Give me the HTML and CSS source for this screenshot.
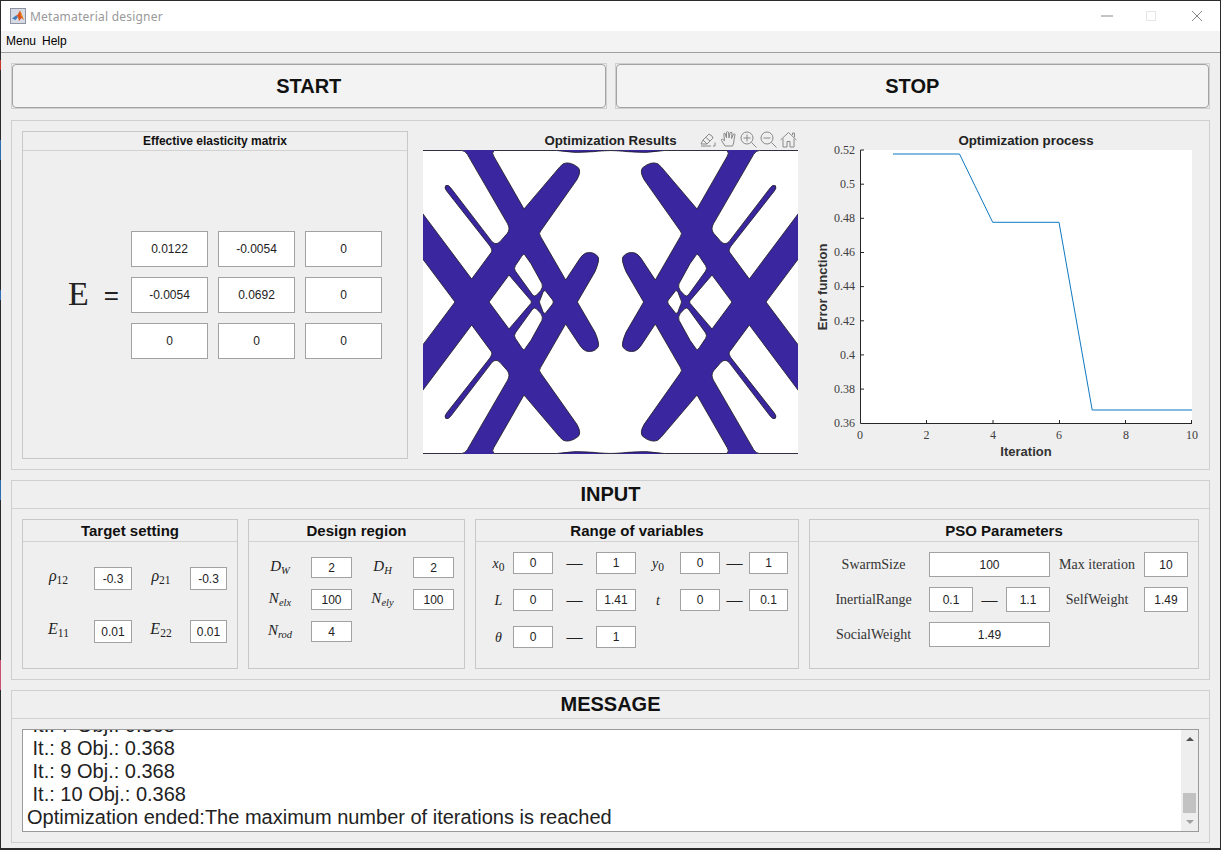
FILE: index.html
```html
<!DOCTYPE html>
<html lang="en">
<head>
<meta charset="utf-8">
<title>Metamaterial designer</title>
<link rel="stylesheet" href="styles.css">
</head>
<body>
<div class="window">
  <header class="titlebar">
    <svg class="appicon" width="16" height="16" viewBox="0 0 16 16">
      <rect x="0.5" y="0.5" width="15" height="15" fill="#d5dae4" stroke="#8d93a0"/>
      <path d="M2 10.5 6 7.5 8 9 5.5 12Z" fill="#3b7cc0"/>
      <path d="M6 7.5 7.6 6.8 10 2.5 11.2 5 13.8 12 11.5 10 9 13 8 9Z" fill="#d9541e"/>
      <path d="M10 2.5 11.2 5 13.8 12 11.2 8Z" fill="#f0a11e"/>
    </svg>
    <span class="apptitle">Metamaterial designer</span>
    <div class="winctl">
      <svg width="120" height="16" viewBox="0 0 120 16">
        <path class="wc" d="M1 8H13"/>
        <rect class="wc-off" x="46.5" y="3.5" width="9" height="9"/>
        <path class="wc" d="M92 3 102 13M102 3 92 13"/>
      </svg>
    </div>
  </header>
  <nav class="menubar"><span>Menu</span><span>Help</span></nav>
  <main class="content">
    <div class="buttons">
      <div class="btn-frame"><button class="btn">START</button></div>
      <div class="btn-frame"><button class="btn">STOP</button></div>
    </div>

    <section class="panel results">
      <div class="subpanel matrix">
        <div class="subtitle small">Effective elasticity matrix</div>
        <div class="matrix-body">
          <div class="eq"><span class="eq-e">E</span><span class="eq-s">=</span></div>
          <div class="matrix-grid">
            <div class="field">0.0122</div><div class="field">-0.0054</div><div class="field">0</div>
            <div class="field">-0.0054</div><div class="field">0.0692</div><div class="field">0</div>
            <div class="field">0</div><div class="field">0</div><div class="field">0</div>
          </div>
        </div>
      </div>

      <div class="plot">
        <div class="plot-title">Optimization Results</div>
        <div class="toolbar">
          <svg width="17" height="17" viewBox="0 0 17 17"><path class="ti" d="M1 13 3 9 9 3 12 5 13 7 7 13ZM3 9 7 13M6 6.500 10 10M1 15H11M15 11.500V15H13"/></svg>
          <svg width="17" height="18" viewBox="0 0 17 18"><path class="ti" d="M5 16 1.500 10.500Q1 9 2.500 9L4.500 11 3.800 4Q4 2.800 5 3.200L6.500 8 6.500 2.200Q7.500 1 8.500 2.200L9 8 10 2.700Q11 1.800 12 2.800L11.500 8.500 13.500 4Q14.800 3.500 15 4.500L14 10Q14 13 12.500 16Z"/></svg>
          <svg width="17" height="17" viewBox="0 0 17 17"><circle class="ti" cx="7" cy="7" r="6"/><path class="ti" d="M11.500 11.500 16.500 16.500M7 3.500V10.500M3.500 7H10.500"/></svg>
          <svg width="17" height="17" viewBox="0 0 17 17"><circle class="ti" cx="7" cy="7" r="6"/><path class="ti" d="M11.500 11.500 16.500 16.500M3.500 7H10.500"/></svg>
          <svg width="17" height="17" viewBox="0 0 17 17"><path class="ti" d="M0.500 9 8.500 1.500 16.500 9M3 7.500V16H7V10.500H10V16H14V7.500M12.500 4V2H14.500V6"/></svg>
        </div>
        <svg class="lattice" width="375" height="304" viewBox="9 75 1125 912">
          <defs>
            <clipPath id="quad"><rect x="0" y="60" width="573" height="471"/></clipPath>
            <g id="q" clip-path="url(#quad)">
              <rect x="0" y="60" width="580" height="480" class="blue"/>
              <path class="hole" d="M0 76.500H125Q135 77 142 88L262 295Q272 312 262 325L240 350Q228 362 216 350L92 188Q85 178 77 182Q72 188 80 198L205 357Q220 375 214 382L155 462L0 255Z"/>
              <path class="hole" d="M222 76.500H410Q465 86 520 80Q550 76 600 76.500V640H480L472 531 525 440Q540 405 534 395Q520 378 498 384Q488 388 480 400L437 465 362 335Q355 325 362 318L470 165Q485 140 475 128Q450 108 430 116L420 125 312 252 222 95Q214 84 222 76.500Z"/>
              <path class="hole" d="M0 391 105 531 0 671Z"/>
              <path class="hole" d="M267 450 333 527Q335 531 333 535L267 612 207 531Z"/>
              <path class="hole" d="M313 388 333 416 366 476Q370 486 362 497L350 510Q344 516 338 510L286 438Q281 430 286 422L305 394Q310 386 313 388Z"/>
              <path class="hole" d="M376 497 398 525Q402 531 398 537L376 565Q370 568 367 560L359 541Q356 531 361 523L369 502Q372 495 376 497Z"/>
            </g>
          </defs>
          <use href="#q"/>
          <use href="#q" transform="translate(1143 0) scale(-1 1)"/>
          <use href="#q" transform="translate(0 1062) scale(1 -1)"/>
          <use href="#q" transform="translate(1143 1062) scale(-1 -1)"/>
        </svg>
      </div>

      <svg class="chart" width="392" height="328" viewBox="808 131 392 328">
        <rect x="860" y="150" width="332" height="273.500" fill="#fff"/>
        <path class="series" d="M893 154H959.500L992.700 222.300H1059L1092.200 410H1192"/>
        <path class="axis" d="M860.500 150V423.500H1192M860.500 150H864M860.500 184.200H864M860.500 218.300H864M860.500 252.500H864M860.500 286.600H864M860.500 320.800H864M860.500 354.900H864M860.500 389.100H864M926.500 423.500V420M993 423.500V420M1059.500 423.500V420M1125.500 423.500V420M1191.500 423.500V420"/>
        <text class="ct" x="1026" y="145">Optimization process</text>
        <g class="yt">
          <text x="855" y="154">0.52</text><text x="855" y="188">0.5</text><text x="855" y="222">0.48</text>
          <text x="855" y="256">0.46</text><text x="855" y="290">0.44</text><text x="855" y="325">0.42</text>
          <text x="855" y="359">0.4</text><text x="855" y="393">0.38</text><text x="855" y="427">0.36</text>
        </g>
        <g class="xt">
          <text x="860" y="439">0</text><text x="926.500" y="439">2</text><text x="993" y="439">4</text>
          <text x="1059" y="439">6</text><text x="1126" y="439">8</text><text x="1192" y="439">10</text>
        </g>
        <text class="al" x="1026" y="456">Iteration</text>
        <text class="al" transform="translate(827 287) rotate(-90)">Error function</text>
      </svg>
    </section>

    <section class="panel io">
      <div class="panel-title">INPUT</div>
      <div class="io-row">
        <div class="subpanel w-target">
          <div class="subtitle">Target setting</div>
          <div class="grid target">
            <div class="lab"><i>ρ</i><sub>12</sub></div><div class="field">-0.3</div>
            <div class="lab"><i>ρ</i><sub>21</sub></div><div class="field">-0.3</div>
            <div class="lab"><i>E</i><sub>11</sub></div><div class="field">0.01</div>
            <div class="lab"><i>E</i><sub>22</sub></div><div class="field">0.01</div>
          </div>
        </div>
        <div class="subpanel w-design">
          <div class="subtitle">Design region</div>
          <div class="grid design">
            <div class="lab tight"><i>D</i><sub class="it">W</sub></div><div class="field">2</div>
            <div class="lab tight"><i>D</i><sub class="it">H</sub></div><div class="field">2</div>
            <div class="lab tight"><i>N</i><sub class="it">elx</sub></div><div class="field">100</div>
            <div class="lab tight"><i>N</i><sub class="it">ely</sub></div><div class="field">100</div>
            <div class="lab tight"><i>N</i><sub class="it">rod</sub></div><div class="field">4</div>
          </div>
        </div>
        <div class="subpanel w-range">
          <div class="subtitle">Range of variables</div>
          <div class="grid range">
            <div class="lab first sm"><i>x</i><sub>0</sub></div><div class="field">0</div><div class="dash">—</div><div class="field">1</div>
            <div class="lab sm"><i>y</i><sub>0</sub></div><div class="field">0</div><div class="dash">—</div><div class="field">1</div>
            <div class="lab first sm"><i>L</i></div><div class="field">0</div><div class="dash">—</div><div class="field">1.41</div>
            <div class="lab sm"><i>t</i></div><div class="field">0</div><div class="dash">—</div><div class="field">0.1</div>
            <div class="lab first sm"><i>θ</i></div><div class="field">0</div><div class="dash">—</div><div class="field">1</div>
          </div>
        </div>
        <div class="subpanel w-pso">
          <div class="subtitle">PSO Parameters</div>
          <div class="grid pso">
            <div class="plab first">SwarmSize</div><div class="field span3">100</div>
            <div class="plab">Max iteration</div><div class="field">10</div>
            <div class="plab first">InertialRange</div><div class="field">0.1</div><div class="dash">—</div><div class="field">1.1</div>
            <div class="plab">SelfWeight</div><div class="field">1.49</div>
            <div class="plab first">SocialWeight</div><div class="field span3">1.49</div>
          </div>
        </div>
      </div>
    </section>

    <section class="panel msg">
      <div class="panel-title">MESSAGE</div>
      <div class="msg-wrap">
        <div class="msgbox">
          <div class="log">
            <div> It.: 7 Obj.: 0.368</div>
            <div> It.: 8 Obj.: 0.368</div>
            <div> It.: 9 Obj.: 0.368</div>
            <div> It.: 10 Obj.: 0.368</div>
            <div>Optimization ended:The maximum number of iterations is reached</div>
          </div>
          <div class="scroll">
            <span class="arrow up"></span>
            <span class="track"></span>
            <span class="thumb"></span>
            <span class="arrow down"></span>
          </div>
        </div>
      </div>
    </section>
  </main>
</div>
</body>
</html>
```

FILE: styles.css
```css
* { box-sizing: border-box; }
html, body { margin: 0; height: 850px; overflow: hidden; }
body {
  font-family: "Liberation Sans", Arial, sans-serif;
  color: #111;
  background-color: #2b2b2b;
  background-image: linear-gradient(#2b2b2b 0 60px, #c0392b 60px 70px, #2b2b2b 70px 140px, #2e6db0 140px 160px, #2b2b2b 160px 290px, #2e6db0 290px 300px, #2b2b2b 300px 480px, #2e6db0 480px 500px, #2b2b2b 500px 660px, #c9506e 660px 690px, #2b2b2b 690px);
  background-size: 1px 100%;
  background-repeat: no-repeat;
}
.window {
  margin: 1px 1px 2px 1px;
  height: 847px;
  display: flex;
  flex-direction: column;
  background: #efefef;
}
.titlebar {
  height: 30px;
  background: #fff;
  display: flex;
  align-items: center;
  padding-left: 9px;
  flex: none;
}
.appicon { flex: none; }
.apptitle {
  margin-left: 4px;
  font: 12px "Noto Sans", sans-serif;
  letter-spacing: 0.22px;
  color: #999;
}
.winctl { margin-left: auto; display: flex; }
.wc { fill: none; stroke: #8a8a8a; stroke-width: 1; }
.wc-off { fill: none; stroke: #e6e6e6; stroke-width: 1; }

.menubar {
  height: 22px;
  flex: none;
  background: #f3f3f3;
  border-bottom: 1px solid #a0a0a0;
  display: flex;
  gap: 6px;
  align-items: center;
  padding: 0 0 2px 5px;
  font-size: 12px;
  color: #000;
}

.content {
  flex: 1;
  padding: 10px 10px 0;
  display: flex;
  flex-direction: column;
  gap: 10px;
}
.buttons { display: flex; gap: 8px; height: 46px; flex: none; margin-bottom: 1px; }
.btn-frame {
  flex: 1;
  border: 1px solid #d0d0d0;
  background: #efefef;
}
.btn {
  display: block;
  width: 100%;
  height: 100%;
  border: 1px solid #a3a3a3;
  border-radius: 4px;
  background: #f3f3f3;
  font: bold 20px "Liberation Sans", Arial, sans-serif;
  color: #111;
  padding: 0;
}

.panel { border: 1px solid #cfcfcf; background: #efefef; flex: none; }
.results {
  height: 350px;
  padding: 10px;
  display: flex;
  gap: 15px;
  align-items: flex-start;
}
.subpanel { border: 1px solid #c8c8c8; background: #efefef; display: flex; flex-direction: column; }
.subtitle {
  height: 22px;
  flex: none;
  border-bottom: 1px solid #d2d2d2;
  text-align: center;
  font-weight: bold;
  font-size: 15px;
  line-height: 22px;
  color: #111;
}
.subtitle.small { height: 19px; font-size: 12px; line-height: 18px; }

.matrix { width: 386px; height: 328px; flex: none; }
.matrix-body { display: flex; padding-top: 80px; }
.eq { width: 108px; height: 128px; display: flex; align-items: center; padding-left: 45px; padding-bottom: 3px; }
.eq-e { font: 34px "Liberation Serif", serif; color: #222; }
.eq-s { font-size: 26px; margin: 3px 0 0 15px; color: #222; }
.matrix-grid {
  display: grid;
  grid-template-columns: repeat(3, 77px);
  grid-auto-rows: 36px;
  gap: 10px;
}

.field {
  background: #fff;
  border: 1px solid #a2a2a2;
  font-size: 12px;
  color: #222;
  display: flex;
  align-items: center;
  justify-content: center;
}

.plot { position: relative; width: 375px; height: 323px; flex: none; }
.plot-title {
  height: 19px;
  text-align: center;
  font-weight: bold;
  font-size: 13.3px;
  line-height: 19px;
  color: #222;
}
.toolbar {
  position: absolute;
  top: -1px;
  left: 277px;
  display: flex;
  gap: 3px;
  align-items: center;
}
.ti { fill: none; stroke: #8a8a8a; stroke-width: 1; }
.lattice { display: block; background: #fff; }
.blue { fill: #3a27a0; }
.hole { fill: #fff; stroke: #1e1e28; stroke-width: 2.6; }

.chart { display: block; flex: none; margin-left: -5px; }
.series { fill: none; stroke: #0f78c2; stroke-width: 1; }
.axis { fill: none; stroke: #262626; stroke-width: 1; }
.ct { font: bold 13.3px "Liberation Sans", Arial, sans-serif; text-anchor: middle; fill: #222; }
.al { font: bold 13px "Liberation Sans", Arial, sans-serif; text-anchor: middle; fill: #333; }
.yt text { font: 12px "Liberation Serif", serif; text-anchor: end; fill: #404040; }
.xt text { font: 12px "Liberation Serif", serif; text-anchor: middle; fill: #404040; }

.io { height: 200px; }
.msg { height: 153px; }
.panel-title {
  height: 28px;
  border-bottom: 1px solid #d2d2d2;
  text-align: center;
  font-weight: bold;
  font-size: 20px;
  line-height: 27px;
  color: #111;
}
.io-row { display: flex; gap: 10px; padding: 10px; height: 170px; }
.io-row .subpanel { height: 150px; flex: none; }
.w-target { width: 216px; }
.w-design { width: 217px; }
.w-range { width: 324px; }
.w-pso { width: 390px; }

.grid { display: grid; align-items: stretch; }
.target { grid-template-columns: 71px 38px 58px 37px; grid-auto-rows: 23px; row-gap: 30px; padding-top: 25px; }
.design { grid-template-columns: 62px 41px 61px 41px; grid-auto-rows: 21px; row-gap: 11px; padding-top: 15px; }
.range { grid-template-columns: 37px 40px 43px 40px 44px 40px 29px 39px; grid-auto-rows: 22px; row-gap: 15px; padding-top: 10px; }
.pso { grid-template-columns: 119px 44px 33px 44px 94px 44px; grid-auto-rows: 25px; row-gap: 10px; padding-top: 10px; }
.span3 { grid-column: span 3; }

.lab {
  font: 16px "Liberation Serif", serif;
  color: #222;
  text-align: center;
  line-height: 18px;
  white-space: nowrap;
}
.lab sub { font-size: 11.5px; line-height: 0; vertical-align: -3px; font-style: normal; }
.lab sub.it { font-style: italic; }
.lab.tight { font-size: 15px; line-height: 19px; }
.lab.tight sub { font-size: 10.5px; }
.lab.sm { font-size: 14px; line-height: 23px; }
.lab.first { padding-left: 8px; }
.plab {
  font: 14px "Liberation Serif", serif;
  color: #333;
  text-align: center;
  align-self: center;
  white-space: nowrap;
  margin-top: 0;
}
.plab.first { padding-left: 8px; }
.dash { font: 16px "Liberation Serif", serif; text-align: center; color: #222; align-self: center; }

.msg-wrap { padding: 10px; }
.msgbox {
  height: 103px;
  background: #fff;
  border: 1px solid #9a9a9a;
  display: flex;
  overflow: hidden;
}
.log {
  flex: 1;
  display: flex;
  flex-direction: column;
  justify-content: flex-end;
  padding: 0 0 2px 4px;
  font-size: 20px;
  line-height: 23px;
  color: #222;
  white-space: pre;
  overflow: hidden;
}
.log div { flex: none; }
.scroll {
  width: 17px;
  flex: none;
  background: #eeeeee;
  display: flex;
  flex-direction: column;
  align-items: center;
  padding: 5px 0 5px;
}
.arrow { width: 0; height: 0; border-left: 4px solid transparent; border-right: 4px solid transparent; flex: none; margin: 2px 0; }
.arrow.up { border-bottom: 4px solid #505050; }
.arrow.down { border-top: 4px solid #a0a0a0; margin-top: 7px; }
.track { flex: 1; }
.thumb { width: 13px; height: 20px; background: #c2c2c2; flex: none; }
```
